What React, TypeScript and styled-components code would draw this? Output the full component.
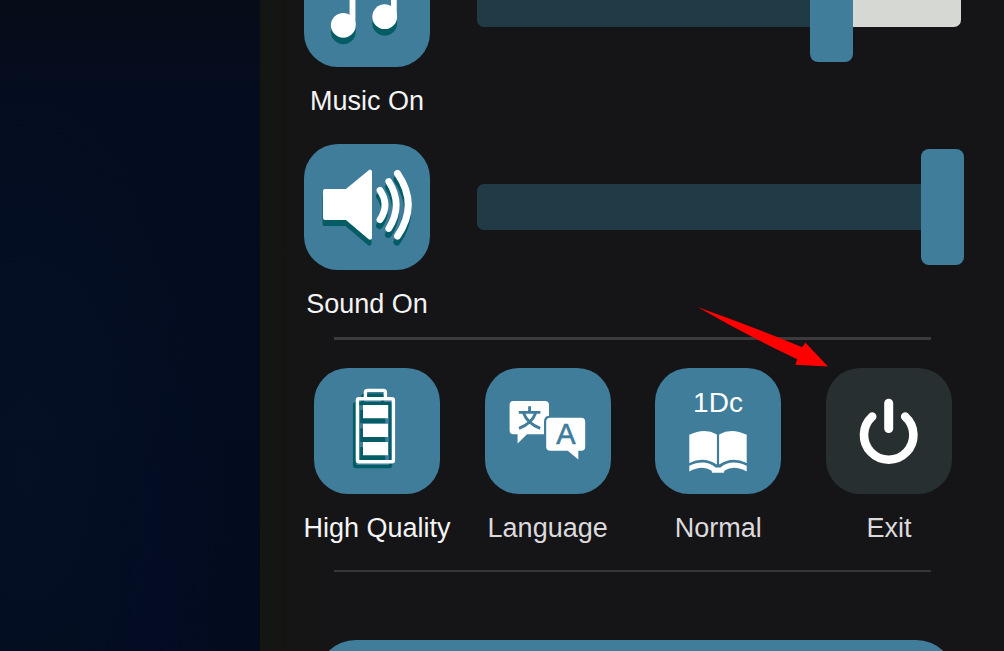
import React, { useState } from "react";
import styled, { createGlobalStyle } from "styled-components";

const BLUE = "#3f7d9b";
const SHADE = "#045c64";

const GlobalStyle = createGlobalStyle`
  *, *::before, *::after { box-sizing: border-box; }
  body {
    margin: 0;
    background: #151417;
    font-family: "Liberation Sans", Arial, sans-serif;
  }
  button { font: inherit; color: inherit; }
`;

const Screen = styled.div`
  display: flex;
  height: 100vh;
  overflow: hidden;
`;

const Backdrop = styled.div`
  flex: 0 0 260px;
  background:
    radial-gradient(ellipse at 10% 72%, rgba(6, 18, 40, 0.6), transparent 60%),
    radial-gradient(ellipse at 60% 100%, rgba(1, 10, 36, 0.6), transparent 40%),
    linear-gradient(#060d18, #040d20 15%, #030c1e);
`;

const Panel = styled.main`
  flex: 1;
  min-width: 0;
  height: max-content;
  margin-top: -59px;
  padding-bottom: 60px;
  background: linear-gradient(90deg, #141612, #151417 80px);
`;

const VolumeRow = styled.section`
  display: flex;
  align-items: flex-start;
  gap: 47px;
  padding: 0 40px 27px 44px;

  & + & { padding-bottom: 17px; }
`;

const TileButton = styled.button`
  position: relative;
  display: flex;
  flex: 0 0 126px;
  flex-direction: column;
  align-items: center;
  gap: 18px;
  width: 126px;
  padding: 0;
  border: 0;
  background: none;
  cursor: pointer;
`;

const Tile = styled.span<{ $muted?: boolean }>`
  display: block;
  width: 126px;
  height: 126px;
  border-radius: 34px;
  background: ${(p) => (p.$muted ? "#272f31" : BLUE)};

  svg { display: block; }
`;

const Caption = styled.span<{ $dim?: boolean }>`
  font-size: 27px;
  line-height: 32px;
  white-space: nowrap;
  color: ${(p) => (p.$dim ? "#dcdadd" : "#f4f4f4")};
`;

const SliderBox = styled.div`
  display: grid;
  flex: 1;
  align-items: center;
  height: 126px;

  & > * { grid-area: 1 / 1; }
`;

const Track = styled.div`
  height: 46px;
  margin-right: 3px;
  border-radius: 7px;
`;

const Range = styled.input`
  appearance: none;
  width: 100%;
  height: 116px;
  margin: 0;
  background: transparent;
  cursor: pointer;

  &::-webkit-slider-thumb {
    appearance: none;
    width: 43px;
    height: 116px;
    border-radius: 8px;
    background: ${BLUE};
  }
  &::-moz-range-thumb {
    width: 43px;
    height: 116px;
    border: 0;
    border-radius: 8px;
    background: ${BLUE};
  }
`;

const Divider = styled.hr<{ $thick?: boolean }>`
  height: ${(p) => (p.$thick ? 3 : 2)}px;
  margin: 0 73px 0 74px;
  border: 0;
  background: ${(p) => (p.$thick ? "#3b3a3c" : "#363538")};
`;

const Options = styled.section`
  display: flex;
  justify-content: space-between;
  padding: 28px 52px 26px 54px;
`;

const Pointer = styled.svg`
  position: absolute;
  top: -62px;
  right: 124px;
  pointer-events: none;
`;

const WideButton = styled.button`
  display: block;
  width: calc(100% - 104px);
  height: 126px;
  margin: 68px 48px 0 56px;
  border: 0;
  border-radius: 40px;
  background: ${BLUE};
  cursor: pointer;
`;

const Glyph = ({ children }: { children: React.ReactNode }) => (
  <svg width="126" height="126" viewBox="0 0 126 126" fill="none" aria-hidden="true">
    {children}
  </svg>
);

const MusicShape = ({ color }: { color: string }) => (
  <g fill={color}>
    <circle cx="39.3" cy="84.3" r="12.4" />
    <circle cx="80.7" cy="75.7" r="12.4" />
    <path d="M45.5 84V34L92.8 24V76H87V42L51.5 50V84Z" />
  </g>
);

const MusicIcon = () => (
  <Glyph>
    <g transform="translate(0 6.5)"><MusicShape color={SHADE} /></g>
    <MusicShape color="#fff" />
  </Glyph>
);

const SpeakerShape = ({ color }: { color: string }) => (
  <g stroke={color} strokeLinecap="round" strokeLinejoin="round">
    <path d="M21 47H42.6L66 27.7V93.7L42.6 74H21Z" fill={color} strokeWidth="4" />
    <path d="M76 46.3Q86 61 76 75.6" strokeWidth="6.8" />
    <path d="M84.8 37.5Q99.6 61 84.8 84.5" strokeWidth="6.8" />
    <path d="M93.5 29.5Q115 61 93.5 92" strokeWidth="7" />
  </g>
);

const SpeakerIcon = () => (
  <Glyph>
    <g transform="translate(-0.5 6)"><SpeakerShape color={SHADE} /></g>
    <SpeakerShape color="#fff" />
  </Glyph>
);

const BatteryShape = ({ color }: { color: string }) => (
  <g>
    <path
      d="M51.4 30V24.4Q51.4 22.4 53.4 22.4H69.4Q71.4 22.4 71.4 24.4V30"
      stroke={color}
      strokeWidth="3.4"
    />
    <rect x="43.4" y="30.7" width="36" height="63" rx="1.5" stroke={color} strokeWidth="3.4" />
    <path d="M49 37H74V50.3H49ZM49 55.7H74V69H49ZM49 74H74V87.3H49Z" fill={color} />
  </g>
);

const BatteryIcon = () => (
  <Glyph>
    <g transform="translate(-2.8 4.9)"><BatteryShape color={SHADE} /></g>
    <BatteryShape color="#fff" />
  </Glyph>
);

const LanguageIcon = () => (
  <Glyph>
    <path
      d="M28.4 33H60Q64 33 64 37V66.3H42L32.6 75.6V66.3H28.4Q24.6 66.3 24.6 62.3V37Q24.6 33 28.4 33Z"
      fill="#fff"
    />
    <path
      d="M65.2 49.7H96.2Q100.2 49.7 100.2 53.7V78.8Q100.2 82.8 96.2 82.8H93.3V91.6L82.8 82.8H65.2Q61.2 82.8 61.2 78.8V53.7Q61.2 49.7 65.2 49.7Z"
      fill="#fff"
      stroke={BLUE}
      strokeWidth="4.4"
      paintOrder="stroke"
    />
    <path
      d="M33.8 44.4H55.4M44.6 38.2V44.4M38.4 44.8Q42.4 55.6 55.2 60.4M50.8 44.8Q46.8 55.6 34 60.4"
      stroke={BLUE}
      strokeWidth="2.9"
    />
    <text x="80.8" y="76.2" fill={BLUE} stroke={BLUE} strokeWidth="0.6" fontSize="29" textAnchor="middle">
      A
    </text>
  </Glyph>
);

const BookIcon = () => (
  <Glyph>
    <text x="63" y="43.6" fill="#fff" fontSize="28" textAnchor="middle">
      1Dc
    </text>
    <g fill="#fff">
      <path d="M34.3 66.8Q49.5 59.4 61.9 66.4V96.6Q49 88 34.3 95Z" />
      <path d="M64.1 66.4Q76.5 59.4 91.7 66.8V95Q77 88 64.1 96.6Z" />
      <path d="M34.3 97.8Q50 90.6 60.6 99.4H65.4Q76 90.6 91.7 97.8V103.6Q79 96.6 69.6 102.6L68.8 104.8H57.2L56.4 102.6Q47 96.6 34.3 103.6Z" />
    </g>
  </Glyph>
);

const PowerIcon = () => (
  <Glyph>
    <g stroke="#fff" strokeLinecap="round">
      <path d="M46.2 48.6A24.7 24.7 0 1 0 79.2 48.6" strokeWidth="8.6" />
      <path d="M62.7 35.2V60.5" strokeWidth="9" />
    </g>
  </Glyph>
);

interface VolumeProps {
  name: string;
  icon: React.ReactNode;
  initial: number;
}

function Volume({ name, icon, initial }: VolumeProps) {
  const [value, setValue] = useState(initial);
  const [on, setOn] = useState(true);
  return (
    <VolumeRow>
      <TileButton type="button" aria-pressed={on} onClick={() => setOn(!on)}>
        <Tile>{icon}</Tile>
        <Caption>{name} {on ? "On" : "Off"}</Caption>
      </TileButton>
      <SliderBox>
        <Track
          style={{
            background: `linear-gradient(90deg, #203b46 ${value}%, #d6d8d4 ${value}%)`,
          }}
        />
        <Range
          type="range"
          min={0}
          max={100}
          value={value}
          aria-label={`${name} volume`}
          onChange={(e) => setValue(Number(e.target.value))}
        />
      </SliderBox>
    </VolumeRow>
  );
}

export default function App() {
  return (
    <>
      <GlobalStyle />
      <Screen>
        <Backdrop />
        <Panel>
          <Volume name="Music" icon={<MusicIcon />} initial={75} />
          <Volume name="Sound" icon={<SpeakerIcon />} initial={100} />
          <Divider $thick />
          <Options>
            <TileButton type="button">
              <Tile><BatteryIcon /></Tile>
              <Caption>High Quality</Caption>
            </TileButton>
            <TileButton type="button">
              <Tile><LanguageIcon /></Tile>
              <Caption $dim>Language</Caption>
            </TileButton>
            <TileButton type="button">
              <Tile><BookIcon /></Tile>
              <Caption $dim>Normal</Caption>
            </TileButton>
            <TileButton type="button">
              <Tile $muted><PowerIcon /></Tile>
              <Caption $dim>Exit</Caption>
              <Pointer width="132" height="62" viewBox="0 0 132 62" aria-hidden="true">
                <path
                  d="M1.5 1Q55 20 106.3 41.3L109.3 36.5L132 60.4L99.3 58.8L101.3 53.3Q50 29 1.5 1Z"
                  fill="#fe0000"
                />
              </Pointer>
            </TileButton>
          </Options>
          <Divider />
          <WideButton type="button" aria-label="Continue" />
        </Panel>
      </Screen>
    </>
  );
}
